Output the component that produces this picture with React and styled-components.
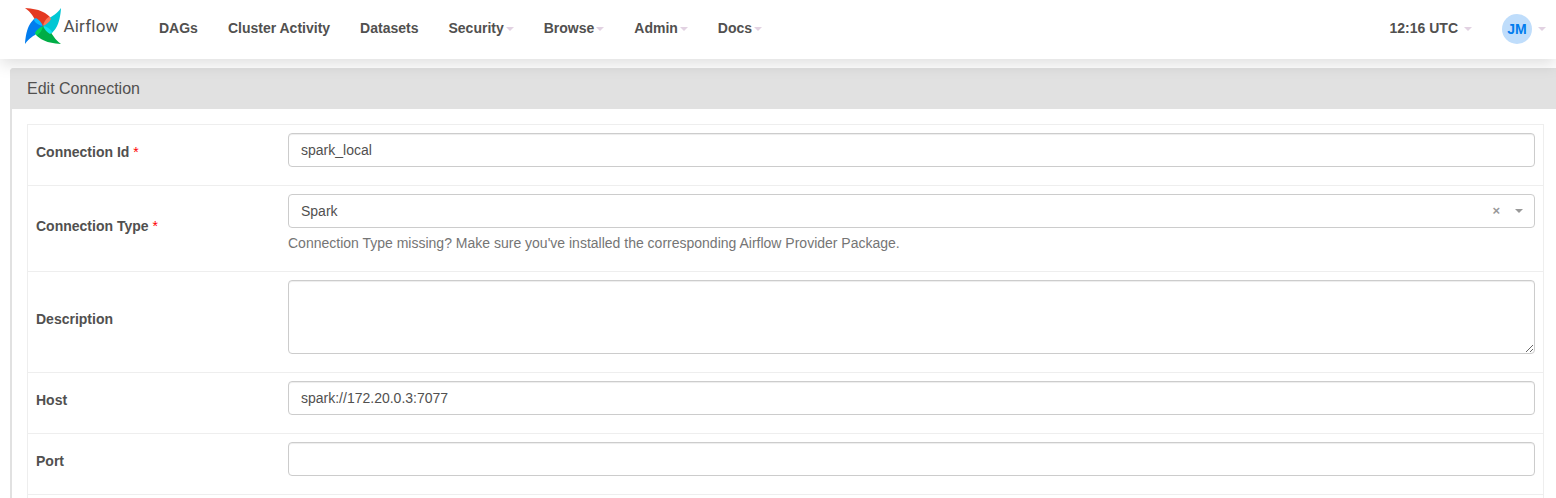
import React from 'react';
import styled, { createGlobalStyle } from 'styled-components';

const Global = createGlobalStyle`
  *, *::before, *::after { box-sizing: border-box; }
  body {
    margin: 0; background: #fff; color: #51504f; overflow: hidden;
    font-family: "Liberation Sans", Arial, sans-serif; font-size: 14px; line-height: 20px;
  }
`;
const Page = styled.div` height: 498px; overflow: hidden; `;
const Navbar = styled.nav`
  position: relative; z-index: 1; display: flex; align-items: center;
  height: 59px; padding: 0 10px 0 24px; background: #fff;
  box-shadow: 0 5px 15px rgba(0, 0, 0, 0.13);
`;
const Brand = styled.a`
  display: flex; align-items: center; width: 120px; height: 40px; margin-top: -6px;
  font: 400 17px/20px Roboto, sans-serif; letter-spacing: 0.2px;
  svg { flex: none; margin: -2px 1.5px 0 0; }
`;
const BrandName = styled.span` margin-top: -2px; `;
const Menu = styled.ul`
  display: flex; list-style: none; margin: 0; padding: 0; margin-top: -3px;
`;
const Item = styled.li`
  display: flex; align-items: center; padding: 0 15px; font-weight: bold; white-space: nowrap;
`;
const Caret = styled.i`
  width: 0; height: 0; margin-left: ${p => p.$gap || 2}px; margin-top: ${p => p.$top ?? 2}px;
  border: 4px solid transparent; border-top-color: ${p => p.$color || '#e2d2e2'}; border-bottom: 0;
`;
const UserArea = styled.div` display: flex; align-items: center; margin-left: auto; `;
const Clock = styled.div`
  display: flex; align-items: center; font-weight: bold; margin-top: -3px; margin-right: 30px;
`;
const Avatar = styled.span`
  display: flex; align-items: center; justify-content: center; width: 30px; height: 30px;
  margin-top: -1px; border-radius: 50%; background: #bfddfb; color: #017cee; font-weight: bold;
`;
const Panel = styled.section`
  margin: 9px -6px 0 10px; border: 2px solid #e1e1e1; border-top: 0; border-radius: 4px 4px 0 0;
`;
const PanelHeading = styled.h4`
  height: 41px; margin: 0 0 0 -2px; padding-left: 17px; background: #e1e1e1;
  border-radius: 4px 4px 0 0; font-size: 16px; font-weight: normal; line-height: 41px;
`;
const Form = styled.form`
  height: 400px; margin: 15px 16px 0 15px; border: 1px solid #eee; border-top: 0;
`;
const Row = styled.div`
  display: grid; grid-template-columns: 252px 1fr; align-items: center;
  height: ${p => p.$height || 61}px; border-top: 1px solid #eee;
  &:last-child { border-bottom: 1px solid #eee; height: 62px; }
`;
const Label = styled.label` padding: 0 8px; margin-bottom: 6px; font-weight: bold; `;
const Required = styled.span` color: #f00; font-weight: normal; `;
const Cell = styled.div` align-self: start; padding: 8px 8px 0; `;
const controlBox = `
  display: block; width: 100%; height: 34px; margin: 0; padding: 6px 12px;
  border: 1px solid #ccc; border-radius: 4px; background: #fff; color: #51504f;
  font: inherit; outline: none;
`;
const Input = styled.input` ${controlBox} box-shadow: inset 0 1px 1px rgba(0, 0, 0, 0.075); `;
const TextArea = styled.textarea`
  ${controlBox} height: 74px; resize: both; box-shadow: inset 0 1px 1px rgba(0, 0, 0, 0.075);
`;
const Select = styled.div` ${controlBox} display: flex; align-items: center; padding-right: 11px; `;
const Clear = styled.span`
  margin-left: auto; margin-right: 13px; color: #999; font-size: 13px; font-weight: bold; line-height: 18px;
`;
const Help = styled.p` margin: 5px 0 0; color: #757575; `;

const BLADES = [
  { turn: 0, main: '#e43921', fold: '#ff7557' },
  { turn: 90, main: '#00c7d4', fold: '#11e1ee' },
  { turn: 180, main: '#00ad46', fold: '#04d659' },
  { turn: 270, main: '#017cee', fold: '#0cb6ff' },
];

const Pinwheel = () => (
  <svg width="38" height="38" viewBox="-19 -19 38 38">
    {BLADES.map(b => (
      <path
        key={b.turn}
        transform={`rotate(${b.turn})`}
        d="M-18-18C-11-17.600-3-16.200 2-13C4.500-11.300 6-10 7-8.800L4-5L0 0L-7.600-5.800C-9.800-9-11.600-13.500-18-18Z"
        fill={b.main}
      />
    ))}
    {BLADES.map(b => (
      <path key={b.turn} transform={`rotate(${b.turn})`} d="M0 0C.8-4 3-8 6.600-9.300C7.300-8.500 7.700-7.800 8-7C6.500-4 3.500-1.500 0 0Z" fill={b.fold} />
    ))}
    <circle r="0.7" fill="#51504f" />
  </svg>
);

const LINKS = [
  ['DAGs'], ['Cluster Activity'], ['Datasets'],
  ['Security', true], ['Browse', true], ['Admin', true], ['Docs', true],
];

const Field = ({ label, required, height, children }) => (
  <Row $height={height}>
    <Label>{label}{required && <Required> *</Required>}</Label>
    <Cell>{children}</Cell>
  </Row>
);

export default function App() {
  return (
    <Page>
      <Global />
      <Navbar>
        <Brand><Pinwheel /><BrandName>Airflow</BrandName></Brand>
        <Menu>
          {LINKS.map(([name, dropdown]) => <Item key={name}>{name}{dropdown && <Caret />}</Item>)}
        </Menu>
        <UserArea>
          <Clock>12:16 UTC<Caret $gap={6} /></Clock>
          <Avatar>JM</Avatar>
          <Caret $gap={6} $top={-1} />
        </UserArea>
      </Navbar>
      <Panel>
        <PanelHeading>Edit Connection</PanelHeading>
        <Form>
          <Field label="Connection Id" required><Input defaultValue="spark_local" /></Field>
          <Field label="Connection Type" required height={86}>
            <Select>Spark<Clear>×</Clear><Caret $color="#999" $top={0} /></Select>
            <Help>Connection Type missing? Make sure you've installed the corresponding Airflow Provider Package.</Help>
          </Field>
          <Field label="Description" height={101}><TextArea /></Field>
          <Field label="Host"><Input defaultValue="spark://172.20.0.3:7077" /></Field>
          <Field label="Port"><Input /></Field>
        </Form>
      </Panel>
    </Page>
  );
}
